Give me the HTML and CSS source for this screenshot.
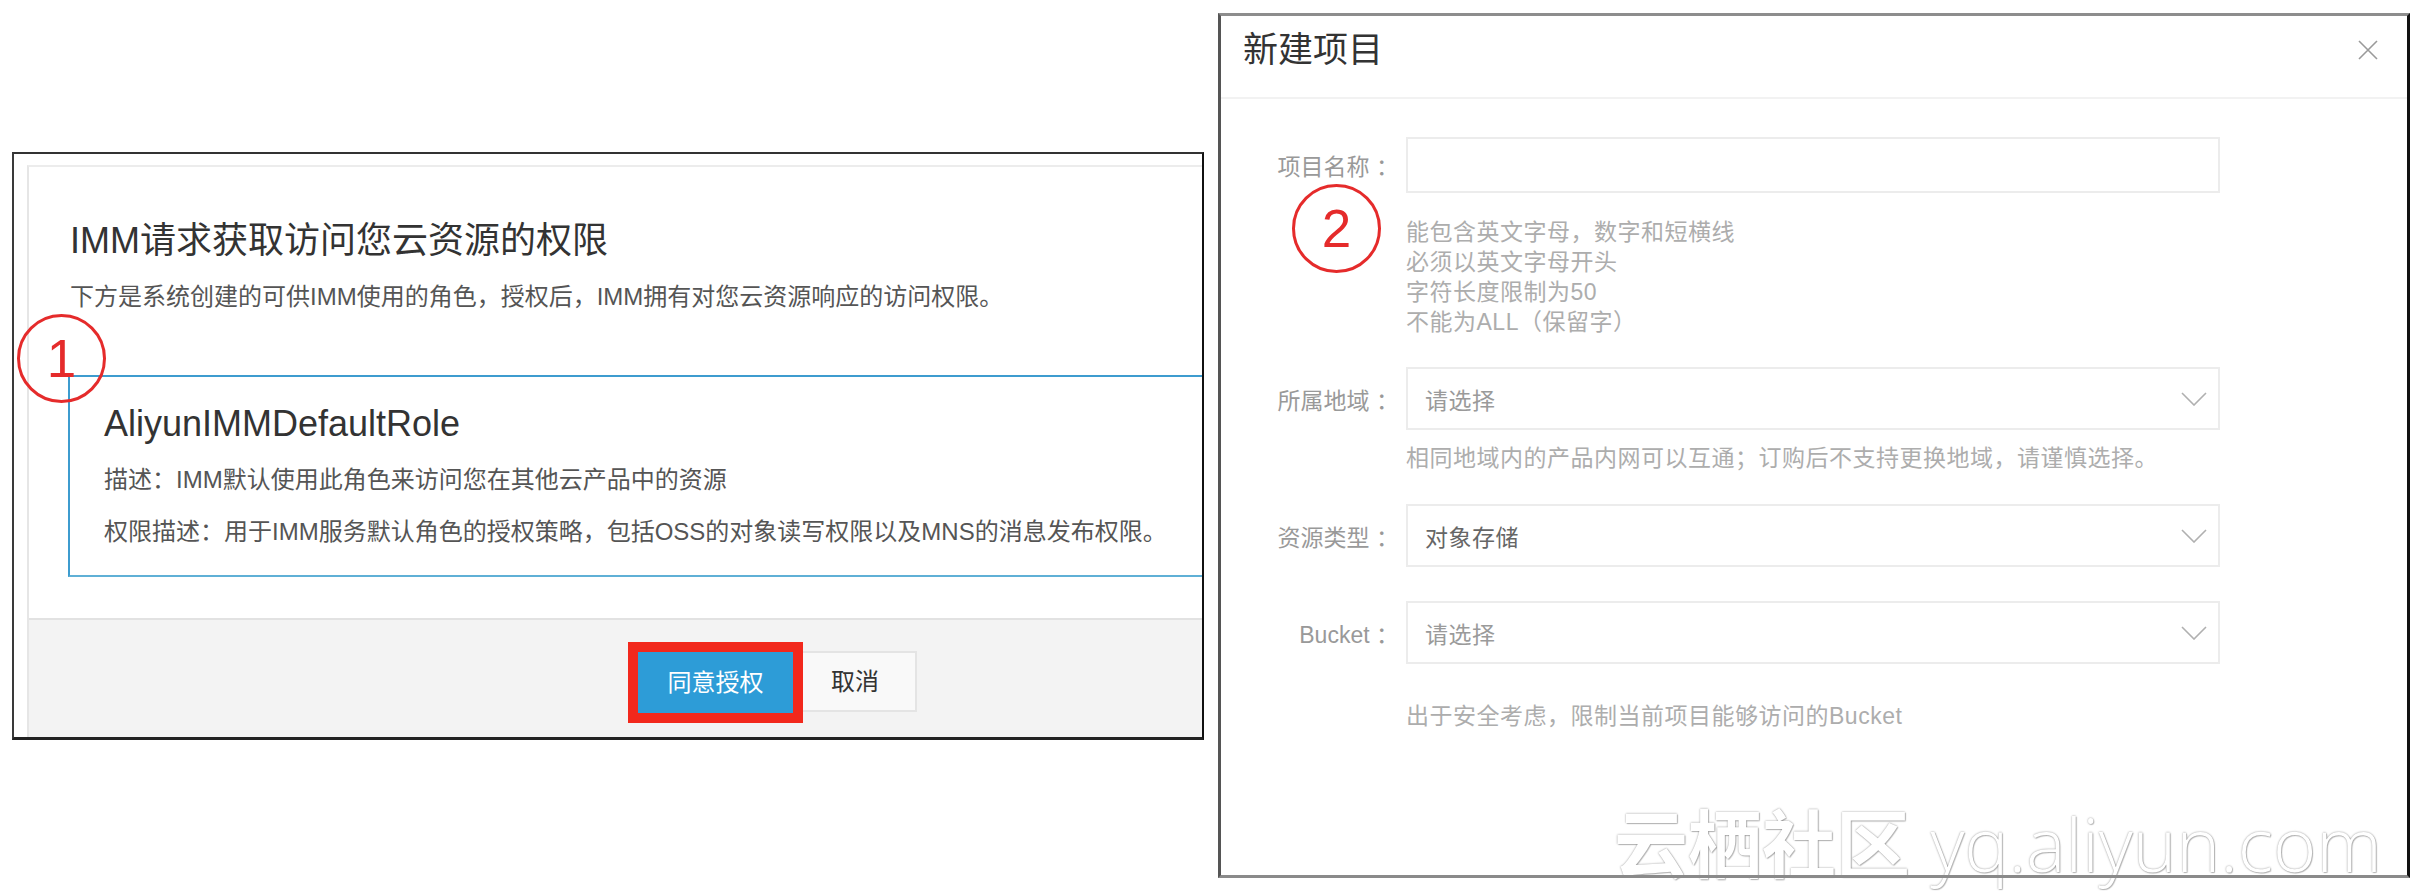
FILE: index.html
```html
<!DOCTYPE html>
<html lang="zh-CN">
<head>
<meta charset="utf-8">
<title>授权与新建项目</title>
<link rel="stylesheet" href="styles.css">
</head>
<body>
<div class="canvas">
  <section class="shot shot-left">
    <div class="modal">
      <div class="modal-body">
        <h1 class="m-title">IMM请求获取访问您云资源的权限</h1>
        <p class="m-sub">下方是系统创建的可供IMM使用的角色，授权后，IMM拥有对您云资源响应的访问权限。</p>
        <div class="role">
          <h2 class="role-name">AliyunIMMDefaultRole</h2>
          <p class="role-line">描述：IMM默认使用此角色来访问您在其他云产品中的资源</p>
          <p class="role-line">权限描述：用于IMM服务默认角色的授权策略，包括OSS的对象读写权限以及MNS的消息发布权限。</p>
        </div>
      </div>
      <div class="modal-foot">
        <button class="btn btn-primary" type="button">同意授权</button>
        <button class="btn btn-default" type="button">取消</button>
      </div>
    </div>
    <div class="mark mark-1">1</div>
  </section>

  <section class="shot shot-right">
    <header class="dlg-head">
      <h1 class="dlg-title">新建项目</h1>
      <span class="close"><svg width="20" height="20" viewBox="0 0 20 20"><path d="M1 1L19 19M19 1L1 19" stroke="#9a9a9a" stroke-width="1.6" fill="none"/></svg></span>
    </header>
    <div class="form">
      <div class="row r1">
        <span class="label">项目名称 ：</span>
        <div class="ctrl input"></div>
        <div class="help h1">能包含英文字母，数字和短横线<br>必须以英文字母开头<br>字符长度限制为50<br>不能为ALL（保留字）</div>
      </div>
      <div class="row r2">
        <span class="label">所属地域 ：</span>
        <div class="ctrl select"><span class="ph">请选择</span><svg width="26" height="14" viewBox="0 0 26 14"><path d="M1 1L13 13L25 1" fill="none" stroke="#b0b0b0" stroke-width="1.6"/></svg></div>
        <div class="help h2">相同地域内的产品内网可以互通；订购后不支持更换地域，请谨慎选择。</div>
      </div>
      <div class="row r3">
        <span class="label">资源类型 ：</span>
        <div class="ctrl select"><span class="val">对象存储</span><svg width="26" height="14" viewBox="0 0 26 14"><path d="M1 1L13 13L25 1" fill="none" stroke="#b0b0b0" stroke-width="1.6"/></svg></div>
      </div>
      <div class="row r4">
        <span class="label">Bucket ：</span>
        <div class="ctrl select"><span class="ph">请选择</span><svg width="26" height="14" viewBox="0 0 26 14"><path d="M1 1L13 13L25 1" fill="none" stroke="#b0b0b0" stroke-width="1.6"/></svg></div>
        <div class="help h4">出于安全考虑，限制当前项目能够访问的Bucket</div>
      </div>
    </div>
    <div class="mark mark-2">2</div>
    <div class="watermark"><span class="wm-cn">云栖社区</span> <span class="wm-en">yq.aliyun.com</span></div>
  </section>
</div>
</body>
</html>
```

FILE: styles.css
```css
* { box-sizing: border-box; }
html, body { margin: 0; padding: 0; background: #fff; }
body {
  width: 2422px;
  height: 892px;
  overflow: hidden;
  font-family: "Liberation Sans", "Noto Sans CJK SC", sans-serif;
  color: #333;
}
.canvas { display: flex; align-items: flex-start; }
.shot { position: relative; background: #fff; }

/* ---------- left screenshot ---------- */
.shot-left {
  margin: 152px 0 0 12px;
  width: 1192px;
  height: 588px;
  overflow: hidden;
  border-style: solid;
  border-width: 2px 2px 3px 2px;
  border-color: #333 #111 #222 #3a3a3a;
  padding: 11px 0 0 13px;
  display: flex;
}
.modal {
  flex: 1;
  display: flex;
  flex-direction: column;
  border-top: 2px solid #ececec;
  border-left: 2px solid #e6e6e6;
}
.modal-body { flex: 1; padding: 52px 0 0 41px; }
.m-title { margin: 0; font-size: 36px; line-height: 44px; font-weight: normal; color: #333; }
.m-sub { margin: 19px 0 0; font-size: 24px; line-height: 30px; color: #555; }
.role {
  margin: 63px 0 0 -2px;
  border: 2px solid #3d9ccf;
  border-bottom-color: #5fb0d6;
  border-right: 0;
  padding: 26px 0 27px 34px;
}
.role-name { margin: 0; font-size: 36px; line-height: 42px; font-weight: normal; color: #333; }
.role-line { margin: 19px 0 0; font-size: 24px; line-height: 32px; color: #555; }
.role-line + .role-line { margin-top: 20px; }
.modal-foot {
  height: 119px;
  border-top: 2px solid #e2e2e2;
  background: #f3f3f3;
  display: flex;
  align-items: flex-start;
  padding: 32px 0 0 609px;
}
.btn {
  height: 61px;
  padding: 0;
  font-family: inherit;
  font-size: 24px;
  line-height: 57px;
  border: 2px solid transparent;
}
.btn-primary {
  width: 155px;
  background: #2d9cd7;
  border-color: #2d9cd7;
  color: #fff;
  outline: 10px solid #f2281c;
  position: relative;
  z-index: 1;
}
.btn-default {
  width: 124px;
  margin-top: -1px;
  background: #f9f9f9;
  border-color: #e4e4e4;
  color: #333;
}

/* ---------- annotation marks ---------- */
.mark {
  position: absolute;
  width: 89px;
  height: 89px;
  border: 3px solid #e52b2b;
  border-radius: 50%;
  display: flex;
  align-items: center;
  justify-content: center;
  color: #e52b2b;
  font-family: "Liberation Sans", sans-serif;
  font-size: 53px;
  line-height: 1;
  z-index: 2;
}
.mark-1 { left: 3px; top: 160px; }
.mark-2 { left: 74px; top: 171px; }

/* ---------- right screenshot ---------- */
.shot-right {
  margin: 13px 0 0 14px;
  width: 1192px;
  height: 865px;
  padding: 3px;
}
.shot-right::after {
  content: "";
  position: absolute;
  inset: 0;
  border-style: solid;
  border-width: 3px;
  border-color: #8d8d8d #111 #8a8a8a #555;
  pointer-events: none;
  z-index: 4;
}
.dlg-head {
  height: 83px;
  border-bottom: 2px solid #f2f2f2;
  display: flex;
  align-items: flex-start;
  justify-content: space-between;
  padding: 14px 29px 0 22px;
}
.dlg-title { margin: 0; font-size: 35px; line-height: 40px; font-weight: normal; color: #333; }
.close { display: block; margin-top: 10px; width: 20px; height: 20px; }
.close svg { display: block; }

.form { padding-top: 38px; }
.row {
  display: grid;
  grid-template-columns: 178px 814px;
  column-gap: 7px;
  align-items: center;
}
.label { text-align: right; font-size: 23px; color: #999; white-space: nowrap; }
.ctrl { border: 2px solid #ececec; background: #fff; }
.input { height: 56px; }
.select {
  height: 63px;
  display: flex;
  align-items: center;
  justify-content: space-between;
  padding: 0 11px 0 17px;
  font-size: 23px;
  letter-spacing: 0.5px;
}
.select svg { display: block; }
.ph { color: #9a9a9a; }
.val { color: #666; }
.help {
  grid-column: 2;
  font-size: 23px;
  line-height: 30px;
  letter-spacing: 0.5px;
  color: #adadad;
}
.h1 { margin-top: 24px; }
.r2 { margin-top: 30px; }
.h2 { margin-top: 13px; }
.r3 { margin-top: 31px; }
.r4 { margin-top: 34px; }
.h4 { margin-top: 37px; }

.watermark {
  position: absolute;
  left: 396px;
  top: 790px;
  white-space: nowrap;
  font-size: 74px;
  line-height: 74px;
  color: #fff;
  z-index: 3;
  text-shadow: 0 0 2px rgba(0, 0, 0, 0.45), 1px 1px 1px rgba(0, 0, 0, 0.2);
}
.wm-cn { font-family: "Noto Sans CJK SC", sans-serif; font-weight: 700; }
.wm-en { font-family: "Open Sans", "Liberation Sans", sans-serif; font-weight: 300; }
```
